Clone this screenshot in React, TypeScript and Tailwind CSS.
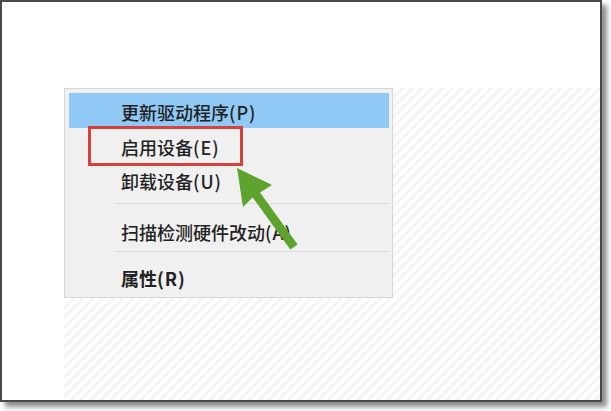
import React from 'react';

const font = { fontFamily: '"Noto Sans CJK SC", "Noto Sans", sans-serif' };

export default function App() {
    return (
        <div className="relative w-[611px] h-[411px] bg-white overflow-hidden" style={font}>
            {/* screenshot frame */}
            <div className="w-[602px] h-[402px] border-2 border-[#4a4a4a] bg-white shadow-[5px_5px_5px_rgba(0,0,0,0.45)] pt-[86px] pl-[62px] flex">
                <div className="flex-1 bg-[repeating-linear-gradient(135deg,#f5f5f5_0px,#f5f5f5_3px,#ffffff_3px,#ffffff_7px)]">
                    {/* context menu */}
                    <div className="w-[329px] h-[210px] bg-[#f0f0f0] border border-[#d6d6d6] pt-[4px] pl-[4px] pr-[3px] text-[18px] font-medium text-[#222] leading-none">
                        <div className="h-[35px] bg-[#91c9f6] flex items-center pl-[52px] pt-[2px]">更新驱动程序<span className="tracking-[1px]">(P)</span></div>
                        <div className="h-[36px] flex items-center pl-[52px] pt-[2px]">启用设备<span className="tracking-[1px]">(E)</span></div>
                        <div className="h-[33px] flex items-center pl-[52px]">卸载设备<span className="tracking-[1px]">(U)</span></div>
                        <div className="pt-[6px] pb-[9px] pl-[46px]">
                            <div className="h-px bg-[#dcdcdc]" />
                        </div>
                        <div className="h-[38px] flex items-center pl-[52px]">扫描检测硬件改动<span className="tracking-[1px]">(A)</span></div>
                        <div className="pl-[46px]">
                            <div className="h-px bg-[#dcdcdc]" />
                        </div>
                        <div className="h-[44px] flex items-center pl-[52px] pt-[8px] font-bold">属性<span className="tracking-[1px]">(R)</span></div>
                    </div>
                </div>
            </div>

            {/* annotation: red box */}
            <div className="absolute left-[88px] top-[126px] w-[155px] h-[40px] border-[3px] border-[#d8403e]" />

            {/* annotation: green arrow */}
            <svg className="absolute left-0 top-0 pointer-events-none" width="611" height="411" viewBox="0 0 611 411">
                <polygon
                    points="237,168 272,185 260,192.5 297.6,244.4 290.3,249.6 252.6,197.4 243,207"
                    fill="#5ea32e"
                />
            </svg>
        </div>
    );
}
